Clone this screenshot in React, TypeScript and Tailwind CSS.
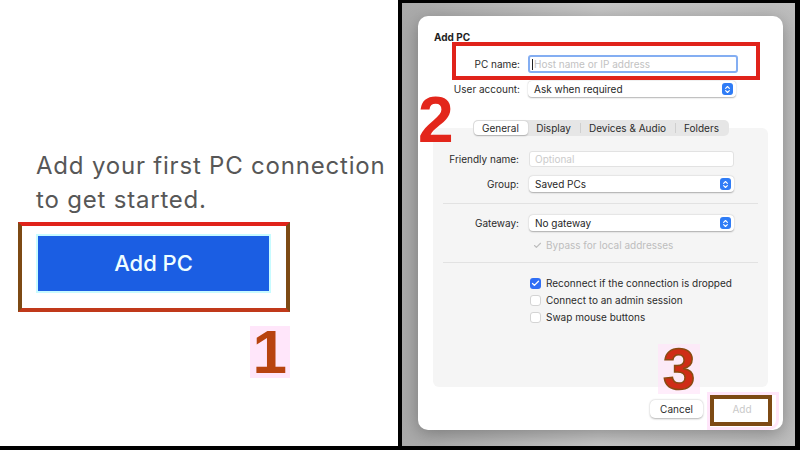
import { ChevronsUpDown, Check } from "lucide-react"

function Stepper() {
  return (
    <span className="flex h-[12px] w-[11px] items-center justify-center rounded-[3px] bg-[#2f7cf6]">
      <ChevronsUpDown className="h-[9px] w-[9px] text-white" strokeWidth={3} />
    </span>
  )
}

function Select({ value, w = "w-[205px]" }: { value: string; w?: string }) {
  return (
    <div className={`flex h-[16px] ${w} items-center justify-between rounded-[4px] bg-white pl-[6px] pr-[3px] text-[#262626] shadow-[0_0.5px_1.5px_rgba(0,0,0,0.3)]`}>
      <span>{value}</span>
      <Stepper />
    </div>
  )
}

function Row({ label, children }: { label: string; children: React.ReactNode }) {
  return (
    <div className="flex items-center">
      <span className="w-[87px] pr-[1px] text-right text-[#2b2b2b]">{label}</span>
      <div className="ml-[9px]">{children}</div>
    </div>
  )
}

function Box({ checked }: { checked?: boolean }) {
  return checked ? (
    <span className="flex h-[11px] w-[11px] items-center justify-center rounded-[3px] bg-[#2f6ef5]">
      <Check className="h-[9px] w-[9px] text-white" strokeWidth={3.5} />
    </span>
  ) : (
    <span className="h-[11px] w-[11px] rounded-[3px] border border-[#d4d4d4] bg-white" />
  )
}

function Tabs() {
  return (
    <div className="relative z-10 mx-auto flex h-[16px] w-[256px] items-center rounded-[5px] bg-[#e6e6e6] p-[1px] text-[#2b2b2b]">
      <span className="flex h-full w-[54px] items-center justify-center rounded-[4px] bg-white shadow-[0_0.5px_1.5px_rgba(0,0,0,0.25)]">General</span>
      <span className="flex h-full w-[52px] items-center justify-center">Display</span>
      <span className="h-[10px] w-px bg-[#cfcfcf]" />
      <span className="flex h-full w-[94px] items-center justify-center">Devices &amp; Audio</span>
      <span className="h-[10px] w-px bg-[#cfcfcf]" />
      <span className="flex h-full flex-1 items-center justify-center">Folders</span>
    </div>
  )
}

export default function App() {
  return (
    <div className="flex h-[450px] w-[800px] bg-black font-['Inter',sans-serif]">
      {/* Left: empty state */}
      <div className="flex h-[446px] w-[398px] flex-col bg-white pl-[18px] pt-[149px]">
        <p className="pl-[18px] text-[24px] leading-[34px] tracking-[0.8px] text-[#575757]">
          Add your first PC connection
          <br />
          to get started.
        </p>
        <div className="mt-[5px] w-[272px] border-4 border-[#e0231a] border-x-[#7d4a14] border-b-[#c0391a] pb-[15px] pl-[14px] pr-[15px] pt-[8px]">
          <div className="flex h-[59px] items-center justify-center border-2 border-[#c8fbff] bg-[#1b5ee3] text-[22px] font-medium text-[#effeff]">
            Add PC
          </div>
        </div>
        <div className="mt-[14px] flex w-[272px] justify-end">
          <span className="bg-[#ffe6fa] px-[3px] font-['Liberation_Sans',sans-serif] text-[62px] font-bold leading-[52px] text-[#b8430f]">1</span>
        </div>
      </div>

      <div className="w-[4px]" />

      {/* Right: dialog */}
      <div className="mt-[3px] h-[443px] w-[393px] bg-gradient-to-r from-[#a9a9a9] via-[#c6c6c6] to-[#bdbdbd] pl-[16px] pt-[13px]">
        <div className="relative flex h-[414px] w-[365px] flex-col rounded-[10px] bg-white text-[10px] shadow-[0_4px_18px_rgba(0,0,0,0.3)]">
          <div className="pl-[16px] pt-[14px] text-[10px] font-bold leading-[14px] text-[#1f1f1f]">Add PC</div>

          <div className="mt-[11px] flex h-[18px] items-center">
            <span className="w-[102px] text-right text-[#2b2b2b]">PC name:</span>
            <div className="ml-[8px] flex h-[18px] w-[210px] items-center rounded-[3px] border-2 border-[#84aef2] bg-white pl-[2px]">
              <span className="h-[11px] w-px bg-[#222]" />
              <span className="pl-[1px] text-[#c2c2c2]">Host name or IP address</span>
            </div>
          </div>

          <div className="mt-[8px] flex items-center">
            <span className="w-[102px] text-right text-[#2b2b2b]">User account:</span>
            <div className="ml-[8px]">
              <Select value="Ask when required" w="w-[208px]" />
            </div>
          </div>

          <div className="mt-[23px]">
            <Tabs />
          </div>

          <div className="mx-[15px] -mt-[8px] flex h-[259px] flex-col rounded-[6px] bg-[#f5f5f5] pt-[23px]">
            <Row label="Friendly name:">
              <div className="flex h-[16px] w-[205px] items-center rounded-[3px] border border-[#e2e2e2] bg-white pl-[5px] text-[#cbcbcb]">Optional</div>
            </Row>
            <div className="mt-[9px]">
              <Row label="Group:">
                <Select value="Saved PCs" />
              </Row>
            </div>
            <div className="mx-[10px] my-[11px] h-px bg-[#e2e2e2]" />
            <Row label="Gateway:">
              <Select value="No gateway" />
            </Row>
            <div className="ml-[100px] mt-[8px] flex items-center gap-[4px] leading-[12px] text-[#bdbdbd]">
              <Check className="h-[9px] w-[9px]" strokeWidth={3} />
              <span>Bypass for local addresses</span>
            </div>
            <div className="mx-[10px] mb-[14px] mt-[11px] h-px bg-[#e2e2e2]" />
            <div className="ml-[97px] flex flex-col gap-[5px] leading-[12px] text-[#2b2b2b]">
              <div className="flex items-center gap-[5px]"><Box checked /><span>Reconnect if the connection is dropped</span></div>
              <div className="flex items-center gap-[5px]"><Box /><span>Connect to an admin session</span></div>
              <div className="flex items-center gap-[5px]"><Box /><span>Swap mouse buttons</span></div>
            </div>
          </div>

          <div className="mr-[11px] mt-[13px] flex justify-end gap-[9px]">
            <div className="flex h-[18px] w-[53px] items-center justify-center rounded-[5px] bg-white text-[#2b2b2b] shadow-[0_0.5px_2px_rgba(0,0,0,0.3)]">Cancel</div>
            <div className="flex h-[18px] w-[60px] items-center justify-center text-[#c9c9c9]">Add</div>
          </div>

          {/* annotations */}
          <div className="absolute left-[34px] top-[26px] h-[38px] w-[308px] border-4 border-[#e0231a]" />
          <span className="absolute left-0 top-[76px] font-['Liberation_Sans',sans-serif] text-[64px] font-bold leading-[56px] text-[#e3261b]">2</span>
          <span className="absolute left-[240px] top-[328px] bg-[#ffe6fa]/70 px-[5px] font-['Liberation_Sans',sans-serif] text-[58px] font-bold leading-[50px] text-[#cf2d16] [-webkit-text-stroke:1.5px_#8a4a12]">3</span>
          <div className="absolute left-[289px] top-[376px] h-[38px] w-[72px] rounded-br-[10px] border-[3px] border-[#ffe6fa]">
            <div className="h-[31px] w-[62px] border-4 border-[#7d4a14]" />
          </div>
        </div>
      </div>
      <div className="h-[446px] w-[5px]" />
    </div>
  )
}
